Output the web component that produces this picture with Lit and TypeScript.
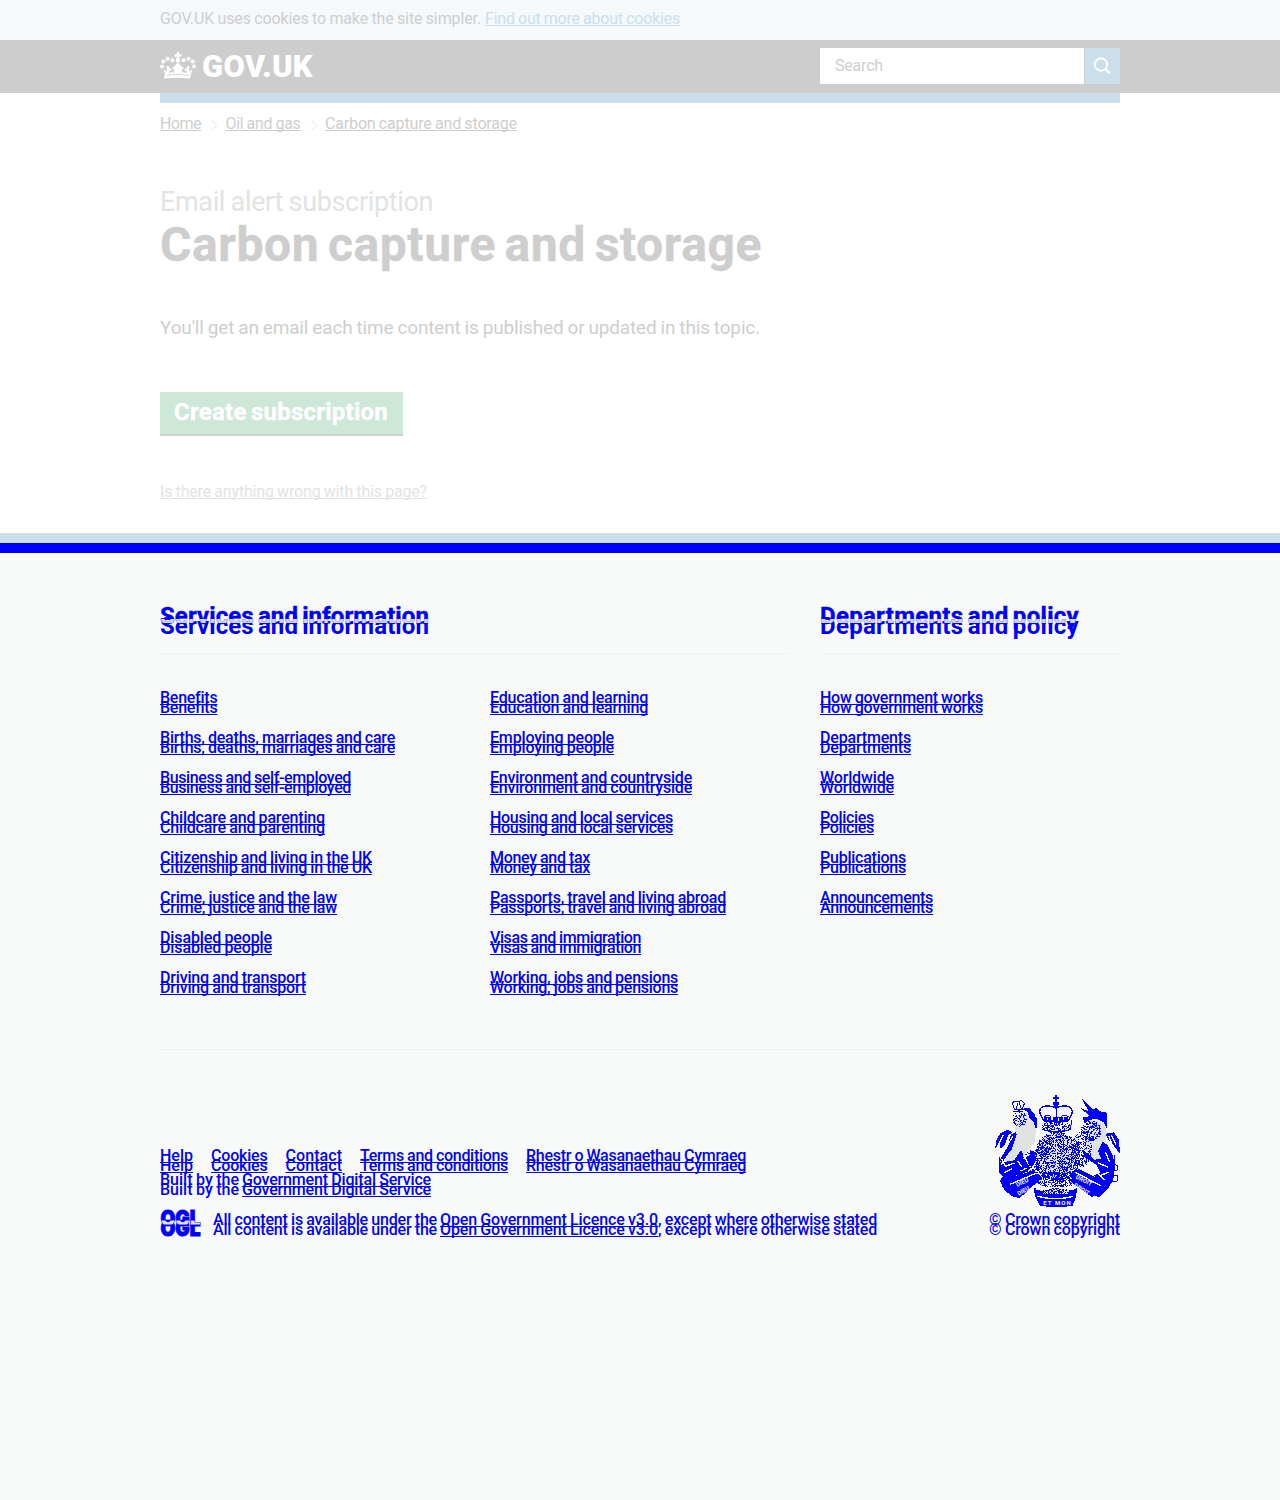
import { LitElement, html, css, svg } from "lit";
import { customElement } from "lit/decorators.js";

type Label = [text: string, width: number];

const SERVICES: Label[][] = [
  [["Benefits", 57], ["Births, deaths, marriages and care", 235], ["Business and self-employed", 191], ["Childcare and parenting", 165], ["Citizenship and living in the UK", 212], ["Crime, justice and the law", 177], ["Disabled people", 112], ["Driving and transport", 146]],
  [["Education and learning", 158], ["Employing people", 124], ["Environment and countryside", 202], ["Housing and local services", 183], ["Money and tax", 100], ["Passports, travel and living abroad", 236], ["Visas and immigration", 151], ["Working, jobs and pensions", 188]],
];
const POLICY: Label[] = [["How government works", 163], ["Departments", 91], ["Worldwide", 74], ["Policies", 54], ["Publications", 86], ["Announcements", 113]];
const META: Label[] = [["Help", 33], ["Cookies", 56.5], ["Contact", 56.5], ["Terms and conditions", 148], ["Rhestr o Wasanaethau Cymraeg", 220]];

// Text tracked so that its line takes up the given width.
const fit = (text: string, width: number) => html`<span class="fit" data-width=${width}>${text}</span>`;
const link = ([text, width]: Label) => html`<a class="link">${fit(text, width)}</a>`;

// Seeded speckle that fills an ellipse with 3-unit squares.
function speckle(cx: number, cy: number, rx: number, ry: number, density: number, seed: number): string {
  let s = seed;
  let d = "";
  for (let y = Math.ceil((cy - ry) / 3) * 3; y < cy + ry; y += 3) {
    for (let x = Math.ceil((cx - rx) / 3) * 3; x < cx + rx; x += 3) {
      s = (s * 1103515245 + 12345) % 2147483648;
      const inside = ((x - cx) / rx) ** 2 + ((y - cy) / ry) ** 2 < 1;
      if (inside && s / 2147483648 < density) d += `M${x} ${y}h3v3h-3z`;
    }
  }
  return d;
}

@customElement("royal-crest")
export class RoyalCrest extends LitElement {
  static styles = css`
    :host { display: block; width: 150px; height: 127px; text-shadow: none; }
    svg { display: block; }
    .ink { fill: #00f; }
    .pale { fill: #e0e2e2; }
    .line { fill: none; stroke: #00f; stroke-width: 4; }
    .thin { fill: none; stroke: #00f; stroke-width: 3; }
    .cut { fill: none; stroke: #f8fafa; stroke-width: 4; }
    .motto { font: 700 18px Roboto, "Liberation Sans", sans-serif; fill: #f8fafa; }
  `;
  render() {
    return html`<svg width="150" height="127" viewBox="0 0 450 381" shape-rendering="crispEdges">${svg`
      <path class="pale" d="M118 75l28 12 22 45-4 40-30 38-35 24-34 14 28-60z"/>
      <path class="pale" d="M330 105l42 8 8 30-10 60 15 35-40-10-35-40z"/>
      <ellipse class="pale" cx="230" cy="210" rx="60" ry="68"/>
      <path class="ink" d="M134 68l18 3 3 9 10 8 0 8 7 5-3 34-8-22-12-12-7-22-12-5z"/>
      <path class="ink" d="M46 190l2-24 14-22 22-10 12 8-12 10-8 24-14 16-3-20z"/>
      <path class="ink" d="M92 150l16-10 2 10-14 42-14 18-18 26-4-12 20-34z"/>
      <path class="cut" d="M54 182l16-32M72 200l26-46"/>
      <path class="ink" d="M57 206l6 34 14-10 26-4 18-28 6-2 2 30 20-14 2-16 12 2 3 34-20 24-35 20-17 16 12 26-10 16-22-18-14-28 8-14-10-12z"/>
      <path class="cut" d="M66 222l10 22 28-10M72 264l24-12M112 228l14 16M138 222l10 20M92 284l22-14M122 258l30-14"/>
      <path class="ink" d="M304 39l35 34 10-4 10 10 22 4 1 52-10-22-14-8-24-8-36-30 28 12z"/>
      <path class="ink" d="M308 98l30-6 12 10-18 2-18 10z"/>
      <path class="ink" d="M378 146l24-4 14 22 5 44-14-18-12-18-10-8-6-12z"/>
      <path class="cut" d="M386 152l14 36M394 150l14 28"/>
      <path class="ink" d="M368 170l14 10 14 26 10 32-6 46-18 30-25 24-14-10 15-30-16-28 20-6-12-24-34-22-12-26 12 8 28 24 20-2-10-24z"/>
      <path class="cut" d="M376 200l12 30M354 234l30 12M364 270l22-8M350 262l26 24"/>
      <circle class="thin" cx="404" cy="248" r="9"/><circle class="thin" cx="404" cy="280" r="10"/>
      <path class="thin" d="M402 210v28M386 262l14-8M384 290l12-6"/>
      <path class="thin" d="M97 54q8-10 18-3q11-9 18 5l-6 16h-24zM108 74l6-20M124 72l-6-20M100 78h30"/>
      <path class="ink" d="M225 30h6v6h6v7h-6v8h6v8h-3v10h-12v-10h-3v-8h6v-8h-6v-7h6z"/>
      <path class="line" d="M190 105l-10-18q-5-22 18-24q16-2 30 7q14-9 30-7q23 2 18 24l-10 18q-38-10-76 0z"/>
      <path class="thin" d="M228 70v25M192 96q12-10 22 0M242 96q12-10 24 0M186 134q42 12 86 0l2-28"/>
      <path class="ink" d="M192 96h72v14h-72z"/>
      <path class="cut" d="M202 98v8M216 94v10M236 98v10M250 96v8"/>
      <path class="ink" d=${speckle(228, 124, 44, 18, 0.5, 11)}/>
      <path class="ink" d=${speckle(118, 100, 21, 26, 0.4, 29)}/>
      <path class="ink" d=${speckle(332, 136, 31, 30, 0.48, 41)}/>
      <path class="ink" d=${speckle(230, 214, 69, 77, 0.5, 73)}/>
      <path class="ink" d=${speckle(304, 190, 30, 54, 0.42, 97)}/>
      <path class="ink" d=${speckle(150, 238, 26, 40, 0.4, 53)}/>
      <path class="ink" d=${speckle(228, 282, 72, 24, 0.5, 61)}/>
      <path class="pale" d="M228 170h4v80h-4z"/>
      <path class="ink" d="M72 268l20 10 68-22 24 24-66 60-26-8-26-26z"/>
      <path class="ink" d="M276 260l22-8 76 40-4 30-34 14-62-44z"/>
      <path class="cut" d="M90 298l80-34M286 262l76 40"/>
      <text class="motto" transform="translate(112 306) rotate(-26)">DIEU</text>
      <text class="motto" transform="translate(116 332) rotate(-29)">DIEU</text>
      <text class="motto" transform="translate(286 280) rotate(27)">DROIT</text>
      <text class="motto" transform="translate(280 304) rotate(32)">DROIT</text>
      <path class="ink" d="M160 308l18 6q50 14 102 0l12-6-4 26-10 28q-48 10-98 0l-14-28z"/>
      <path class="cut" d="M170 312q58 20 110 0M172 334q56 14 108 0"/>
      <path class="pale" d="M188 316h80v12h-80z"/>
      <path class="ink" d=${speckle(228, 320, 44, 12, 0.55, 7)}/>
      <text class="motto" x="190" y="361" textLength="82">ET MON</text>
    `}</svg>`;
  }
}

@customElement("app-root")
export class AppRoot extends LitElement {
  static styles = css`
    :host { display: block; height: 1500px; overflow: hidden; background: #fff; color: #cecece; font: 400 16px/20px Roboto, "Liberation Sans", sans-serif; }
    * { box-sizing: border-box; }
    h1, h2, p, ul { margin: 0; padding: 0; font-weight: inherit; }
    ul { list-style: none; }
    .wrap { width: 960px; margin: 0 auto; }
    .fit { white-space: pre; display: inline-block; text-decoration: inherit; word-spacing: -0.03em; }
    .link { text-decoration: underline; text-decoration-thickness: 1px; text-underline-offset: 1px; text-decoration-skip-ink: none; }
    .cookies { height: 40px; padding-top: 9px; background: #f5f9fc; }
    .cookies .wrap { display: flex; gap: 4px; }
    .cookies .link { color: #cbdeeb; }
    .masthead { height: 53px; background: #cdcdcd; }
    .masthead .wrap { display: flex; justify-content: space-between; padding-top: 8px; }
    .brand { display: flex; color: #fff; font-size: 31px; font-weight: 900; line-height: 37px; }
    .crown { width: 36px; height: 27px; margin: 4px 6px 0 0; fill: #fff; }
    .holes { fill: none; stroke: #cdcdcd; stroke-width: 0.9; }
    .search { display: flex; gap: 1px; width: 300px; height: 36px; }
    .field { flex: 1; background: #fff; padding: 8px 15px; }
    .go { width: 35px; height: 36px; background: #cbdeeb; }
    .bar { height: 10px; background: #cbdeeb; }
    .crumbs { display: flex; padding-top: 11px; height: 82px; }
    .chevron { width: 24.5px; height: 20px; fill: none; stroke: #f1f1f1; stroke-width: 1.6; }
    .context { font-size: 27px; line-height: 34px; color: #e2e3e4; }
    .title { font-size: 48px; font-weight: 700; line-height: 50px; padding-top: 1px; }
    .lead { font-size: 19px; line-height: 24px; margin-top: 46px; }
    .button { display: flex; width: 243px; height: 44px; margin-top: 52px; padding: 0 14px; background: #cde7d8; border-bottom: 2px solid #c8d6ce; color: #fff; font-size: 24px; font-weight: 700; line-height: 40px; }
    .title .fit, .button .fit, .heading .fit { word-spacing: -0.08em; -webkit-text-stroke: 0.4px currentColor; }
    .report { margin-top: 46px; height: 51px; color: #e2e3e4; }
    .footer { border-top: 10px solid #cbdeeb; background: #f8fafa; height: 967px; color: #00f; font-weight: 500; }
    .stripe { height: 10px; background: #00f; }
    .footer .wrap { text-shadow: 0 10px 0 #00f; }
    .groups { display: grid; grid-template-columns: 630px 300px; gap: 30px; padding-top: 46px; height: 497px; border-bottom: 1px solid #f0f2f2; }
    .heading { position: relative; height: 55px; border-bottom: 1px solid #f0f2f2; font-size: 24px; font-weight: 700; line-height: 34px; }
    .overlap { position: absolute; left: 0; top: 0; color: #d2d3d3; text-shadow: none; clip-path: inset(20px 0 10px 0); pointer-events: none; }
    .columns { display: grid; grid-template-columns: 300px 300px; gap: 30px; }
    .list { display: grid; gap: 20px; padding-top: 34px; }
    .legal { display: flex; justify-content: space-between; padding-top: 35px; }
    .notes { padding-top: 61px; }
    .meta { display: flex; gap: 18px; }
    .built { margin-top: 4px; display: flex; gap: 3px; }
    .licence { display: flex; gap: 12px; margin-top: 15px; }
    .licence p { display: flex; gap: 3px; padding-top: 5px; }
    .ogl { width: 41px; height: 30px; margin-top: 3px; overflow: visible; font: 900 22px Inter, sans-serif; fill: #00f; stroke: #00f; stroke-width: 1px; text-shadow: none; }
    .ogl .mid { fill: #e0e2e2; stroke: none; }
    .crown-note { display: flex; flex-direction: column; align-items: flex-end; }
    .crown-note royal-crest { margin-right: -10px; margin-bottom: -2px; }
  `;

  firstUpdated() {
    for (const el of this.renderRoot.querySelectorAll<HTMLElement>(".fit")) {
      const target = Number(el.dataset.width);
      const count = el.textContent!.length;
      el.style.letterSpacing = `${(target - el.getBoundingClientRect().width) / count}px`;
    }
  }

  private heading(text: string, width: number) {
    return html`<h2 class="heading">${fit(text, width)}<span class="overlap" aria-hidden="true">${fit(text, width)}</span></h2>`;
  }

  private list(items: Label[]) {
    return html`<ul class="list">${items.map((item) => html`<li>${link(item)}</li>`)}</ul>`;
  }

  render() {
    const chevron = html`<svg class="chevron" viewBox="0 0 25 20"><path d="M10.500 6l5.500 5.500-5.500 5.500"/></svg>`;
    return html`
      <div class="cookies"><div class="wrap">${fit("GOV.UK uses cookies to make the site simpler.", 321)}${link(["Find out more about cookies", 195])}</div></div>
      <header class="masthead"><div class="wrap">
        <div class="brand">
          <svg class="crown" viewBox="0 0 36 27">
            <path d="M16.800 0h2.400v2.200h2.300v2.600h-2.300l1 4.500-2.200 2.200-2.200-2.200 1-4.500h-2.300V2.200h2.300z"/>
            <circle cx="12.500" cy="8.300" r="2"/><circle cx="23.500" cy="8.300" r="2"/>
            <circle cx="7.500" cy="6.800" r="2"/><circle cx="28.500" cy="6.800" r="2"/>
            <circle cx="3.300" cy="9.600" r="2"/><circle cx="32.700" cy="9.600" r="2"/>
            <circle cx="2" cy="14.500" r="2"/><circle cx="34" cy="14.500" r="2"/>
            <path d="M3.500 17l3 2.400.7-3-1.200-1.900 2.600-.4.900 2.700 1.600-.8v3l-2.100-.5.2 2.500 3.300-.8 2.400-2.800-2.400-.7.200-2 2.200.6-.8-2.100h1.800l.5-1.800h3.200l.5 1.800h1.800l-.8 2.100 2.200-.6.2 2-2.400.7 2.400 2.800 3.300.8.200-2.500-2.100.5v-3l1.600.8.900-2.700 2.600.4-1.200 1.900.7 3 3-2.400-1.600 5-.9 4.500q-13-1.700-26 0L5 22z"/>
            <path class="holes" d="M7 23.300q11-1.800 22 0M13 19l1.500 2M23 19l-1.500 2"/>
          </svg>
          ${fit("GOV.UK", 111)}
        </div>
        <div class="search"><div class="field">${fit("Search", 48)}</div>
          <svg class="go" viewBox="0 0 35 36"><circle cx="16" cy="16.500" r="6.200" fill="none" stroke="#fff" stroke-width="2"/><path d="M20.500 21l4.300 4.300" stroke="#fff" stroke-width="3"/></svg>
        </div>
      </div></header>
      <main class="wrap">
        <div class="bar"></div>
        <nav class="crumbs">${link(["Home", 41])}${chevron}${link(["Oil and gas", 75])}${chevron}${link(["Carbon capture and storage", 192])}</nav>
        <p class="context">${fit("Email alert subscription", 273)}</p>
        <h1 class="title">${fit("Carbon capture and storage", 602)}</h1>
        <p class="lead">${fit("You'll get an email each time content is published or updated in this topic.", 600)}</p>
        <div class="button">${fit("Create subscription", 214)}</div>
        <p class="report">${link(["Is there anything wrong with this page?", 267])}</p>
      </main>
      <footer class="footer">
        <div class="stripe"></div>
        <div class="wrap">
          <div class="groups">
            <section>${this.heading("Services and information", 269)}<div class="columns">${SERVICES.map((c) => this.list(c))}</div></section>
            <section>${this.heading("Departments and policy", 259)}${this.list(POLICY)}</section>
          </div>
          <div class="legal">
            <div class="notes">
              <div class="meta">${META.map(link)}</div>
              <p class="built">${fit("Built by the", 79)}${link(["Government Digital Service", 189])}</p>
              <div class="licence">
                <svg class="ogl" viewBox="0 0 41 30"><defs><clipPath id="mid"><rect y="12.500" width="41" height="4"/></clipPath></defs>
                  <text x="0.500" y="17.500" textLength="40" lengthAdjust="spacingAndGlyphs">OGL</text>
                  <text x="0.500" y="27.500" textLength="40" lengthAdjust="spacingAndGlyphs">OGL</text>
                  <text class="mid" x="0.500" y="17.500" textLength="40" lengthAdjust="spacingAndGlyphs" clip-path="url(#mid)">OGL</text>
                </svg>
                <p>${fit("All content is available under the", 224)}<span>${link(["Open Government Licence v3.0", 218])}${fit(", except where otherwise stated", 219)}</span></p>
              </div>
            </div>
            <div class="crown-note"><royal-crest></royal-crest>${fit("© Crown copyright", 131)}</div>
          </div>
        </div>
      </footer>`;
  }
}
